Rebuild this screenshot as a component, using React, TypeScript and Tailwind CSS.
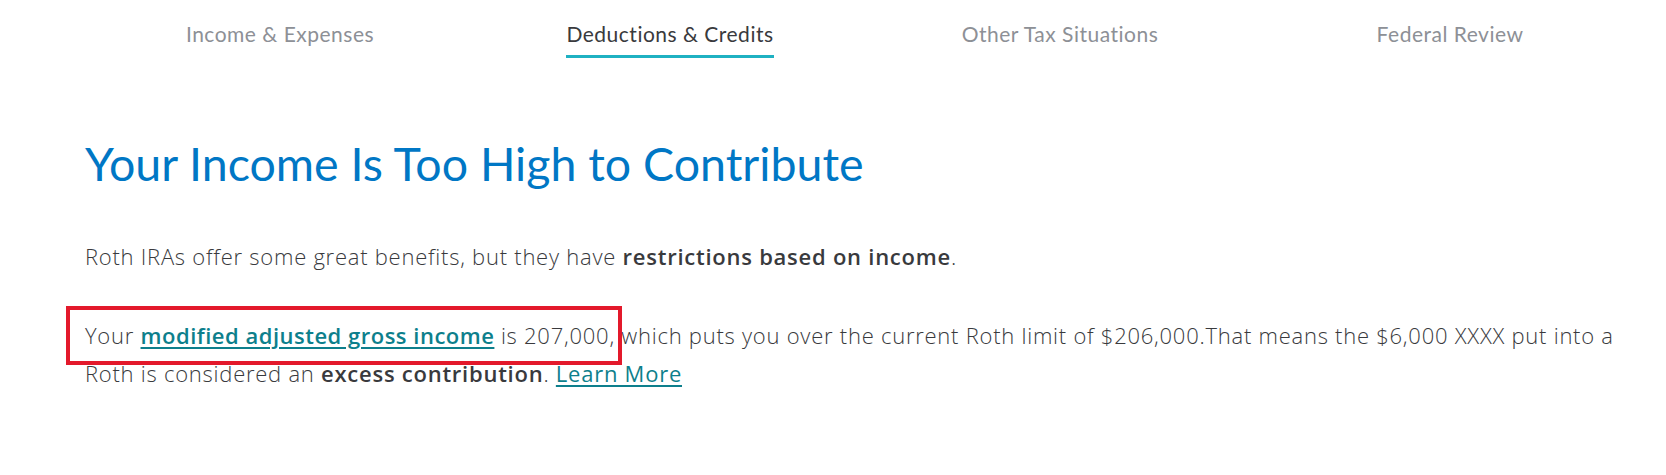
import React from "react";

export default function App() {
  const tabs = [
    { label: "Income & Expenses", active: false },
    { label: "Deductions & Credits", active: true },
    { label: "Other Tax Situations", active: false },
    { label: "Federal Review", active: false },
  ];
  return (
    <div
      className="w-full h-[475px] bg-white overflow-hidden"
      style={{ fontFamily: "Lato, 'Open Sans', sans-serif" }}
    >
      <nav className="flex pl-[85px] pr-[21px] pt-[20px]">
        {tabs.map((t) => (
          <div key={t.label} className="flex-1 flex justify-center">
            <div className="flex flex-col items-center">
              <span
                className={
                  "text-[21px] leading-[28px] tracking-[0.5px] " +
                  (t.active ? "text-[#393a3d]" : "text-[#8d9096]")
                }
              >
                {t.label}
              </span>
              <div
                className={
                  "mt-[7px] h-[3px] w-full " +
                  (t.active ? "bg-[#1fb1c2]" : "bg-transparent")
                }
              />
            </div>
          </div>
        ))}
      </nav>
      <main className="pl-[85px] pr-[21px]">
        <h1 className="mt-[77px] text-[46.5px] leading-[56px] font-normal text-[#0077c5]">
          Your Income Is Too High to Contribute
        </h1>
        <div className="font-['Open_Sans',sans-serif] tracking-[0.75px]">
          <p className="mt-[46px] text-[22px] leading-[38px] font-light text-[#393a3d]">
            Roth IRAs offer some great benefits, but they have{" "}
            <span className="font-semibold">restrictions based on income</span>.
          </p>
          <div className="relative mt-[41px]">
            <p className="text-[22px] leading-[38px] font-light text-[#393a3d]">
              Your{" "}
              <a className="font-semibold text-[#0d7f8c] underline underline-offset-[3px] decoration-[1.5px] tracking-[0.5px]">
                modified adjusted gross income
              </a>{" "}
              is 207,000, which puts you over the current Roth limit of $206,000.That means the $6,000 XXXX put into a Roth is considered an{" "}
              <span className="font-semibold">excess contribution</span>.{" "}
              <a className="font-normal text-[#0d7f8c] underline underline-offset-[3px] decoration-[1.5px]">
                Learn More
              </a>
            </p>
            <div className="absolute left-[-19px] top-[-10px] w-[556px] h-[59px] border-[4px] border-[#e3192b] pointer-events-none" />
          </div>
        </div>
      </main>
    </div>
  );
}
